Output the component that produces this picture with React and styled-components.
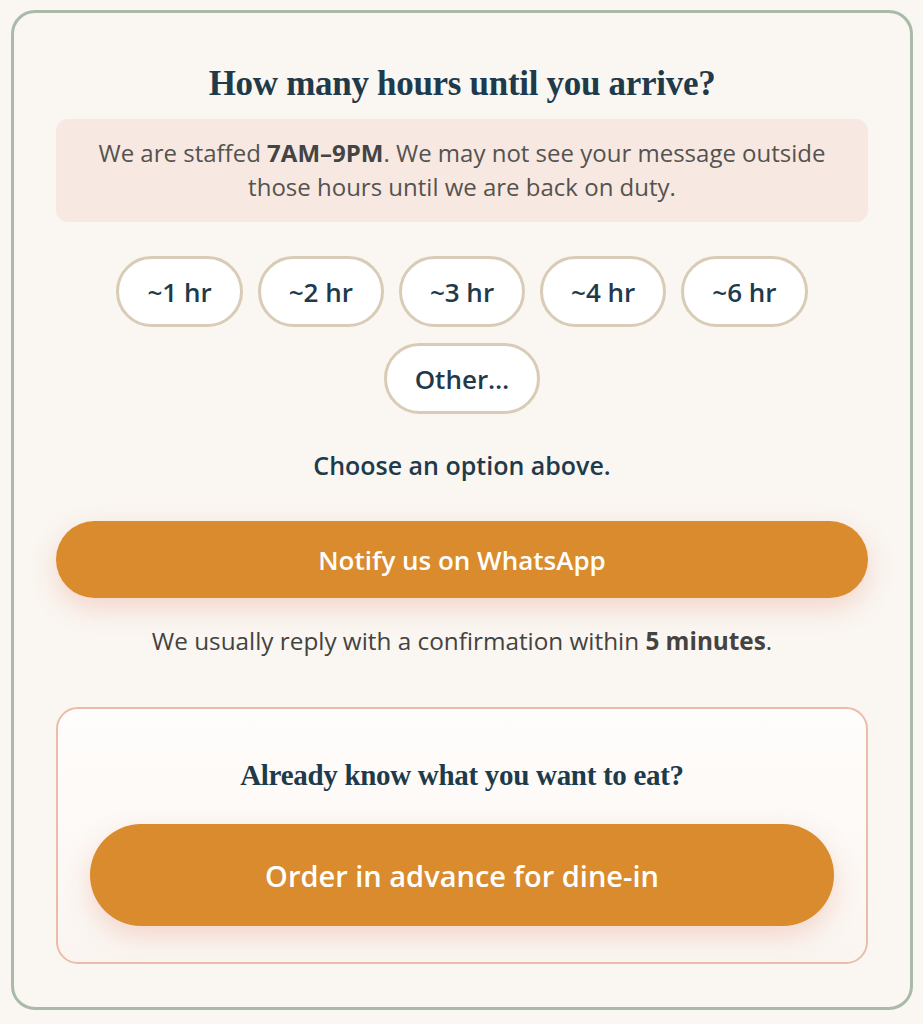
import React from 'react'
import styled, { createGlobalStyle } from 'styled-components'

const HOURS = ['~1 hr', '~2 hr', '~3 hr', '~4 hr', '~6 hr', 'Other…']

function App() {
    return (
        <>
            <GlobalStyle />
            <Page>
                <Card>
                    <Title>How many hours until you arrive?</Title>

                    <Notice>
                        We are staffed <b>7AM–9PM</b>. We may not see your message outside
                        those hours until we are back on duty.
                    </Notice>

                    <Chips>
                        {HOURS.map(h => (
                            <Chip key={h}>{h}</Chip>
                        ))}
                    </Chips>

                    <Hint>Choose an option above.</Hint>

                    <CtaButton>Notify us on WhatsApp</CtaButton>

                    <Reply>
                        We usually reply with a confirmation within <b>5 minutes</b>.
                    </Reply>

                    <OrderBox>
                        <OrderTitle>Already know what you want to eat?</OrderTitle>
                        <CtaButton big>Order in advance for dine-in</CtaButton>
                    </OrderBox>
                </Card>
            </Page>
        </>
    )
}

export default App

const GlobalStyle = createGlobalStyle`
    * { box-sizing: border-box; }
    body {
        margin: 0;
        background: #faf6f1;
        font-family: "Open Sans", "Noto Sans", sans-serif;
    }
`

const Page = styled.div`
    padding: 10px 10px 12px 11px;
`

const Card = styled.div`
    border: 3px solid #a9baa9;
    border-radius: 24px;
    background: #faf6f1;
    padding: 50px 42px 43px;
    display: flex;
    flex-direction: column;
    align-items: center;
`

const Title = styled.h1`
    margin: 0 0 14px;
    font-family: "Liberation Serif", "DejaVu Serif", serif;
    font-weight: 700;
    font-size: 35px;
    line-height: 42px;
    color: #1e3a4b;
    letter-spacing: -0.3px;
`

const Notice = styled.div`
    align-self: stretch;
    background: #f7e9e1;
    border-radius: 12px;
    padding: 17px 40px 18px;
    text-align: center;
    font-size: 24px;
    line-height: 34px;
    color: #555250;

    b { font-weight: 700; color: #444; }
`

const Chips = styled.div`
    margin-top: 34px;
    display: flex;
    flex-wrap: wrap;
    justify-content: center;
    gap: 16px 15px;
    max-width: 720px;
`

const Chip = styled.button`
    height: 71px;
    padding: 0 28px;
    border: 3px solid #d9ccb6;
    border-radius: 999px;
    background: #fff;
    font-family: "Open Sans", sans-serif;
    font-weight: 600;
    font-size: 26px;
    line-height: 1;
    color: #1e3a4b;
    cursor: pointer;
`

const Hint = styled.p`
    margin: 34px 0 0;
    font-weight: 600;
    font-size: 25px;
    line-height: 34px;
    color: #1e3a4b;
`

const CtaButton = styled.button`
    align-self: stretch;
    height: ${p => (p.big ? '102px' : '77px')};
    margin-top: ${p => (p.big ? '0' : '39px')};
    border: none;
    border-radius: 999px;
    background: #d98b2e;
    color: #fff;
    font-family: "Open Sans", sans-serif;
    font-weight: 600;
    font-size: ${p => (p.big ? '29px' : '26px')};
    box-shadow: 0 10px 26px rgba(228, 140, 115, 0.3);
    cursor: pointer;
`

const Reply = styled.p`
    margin: 26px 0 0;
    font-size: 24.3px;
    line-height: 34px;
    color: #45423f;

    b { font-weight: 700; }
`

const OrderBox = styled.div`
    align-self: stretch;
    margin-top: 49px;
    border: 2px solid #ecbcab;
    border-radius: 22px;
    background: linear-gradient(#fffdfc, #faf5f0);
    padding: 47px 32px 36px;
    display: flex;
    flex-direction: column;
    align-items: center;
`

const OrderTitle = styled.h2`
    margin: 0 0 30px;
    font-family: "Liberation Serif", "DejaVu Serif", serif;
    font-weight: 700;
    font-size: 29px;
    line-height: 38px;
    color: #1e3a4b;
    letter-spacing: -0.3px;
`
